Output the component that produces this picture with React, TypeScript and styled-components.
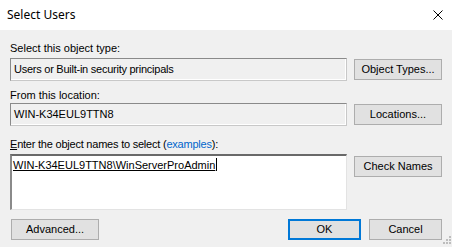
import React from "react";
import styled, { createGlobalStyle } from "styled-components";

const Global = createGlobalStyle`
  html, body { margin: 0; padding: 0; background: #f0f0f0; }
  body { width: 452px; height: 247px; overflow: hidden; }
`;

const Dialog = styled.div`
  position: relative;
  width: 452px;
  height: 247px;
  background: #f0f0f0;
  font-family: "Liberation Sans", Arial, sans-serif;
  font-size: 11px;
  color: #000;
  display: flex;
  flex-direction: column;
`;

const TitleBar = styled.div`
  height: 30px;
  background: #fff;
  display: flex;
  align-items: center;
  justify-content: space-between;
  padding: 0 9px 0 7px;
  flex-shrink: 0;
`;

const Title = styled.span`
  font-family: "Noto Sans", "Open Sans", sans-serif;
  font-size: 12px;
  color: #000;
  margin-top: -1px;
`;

const CloseIcon = styled.svg`
  width: 10px;
  height: 10px;
  display: block;
`;

const Body = styled.div`
  padding: 12px 10px 0 10px;
  display: flex;
  flex-direction: column;
`;

const Label = styled.div<{ $mt?: number; $tight?: boolean }>`
  height: 13px;
  line-height: 13px;
  margin-top: ${(p) => p.$mt ?? 0}px;
  white-space: nowrap;
  letter-spacing: ${(p) => (p.$tight ? "-0.22px" : "0")};
`;

const Row = styled.div<{ $mt?: number }>`
  display: grid;
  grid-template-columns: 337px 88px;
  column-gap: 7px;
  align-items: start;
  margin-top: ${(p) => p.$mt ?? 0}px;
`;

const ReadField = styled.div<{ $tight?: boolean }>`
  box-sizing: border-box;
  height: 23px;
  border: 1px solid #8a8a8a;
  border-right-color: #c8c8c8;
  border-bottom-color: #c8c8c8;
  box-shadow: inset -1px -1px 0 #fff;
  background: #f0f0f0;
  padding: 0 0 0 3px;
  line-height: 20px;
  white-space: nowrap;
  letter-spacing: ${(p) => (p.$tight ? "-0.25px" : "0")};
`;

const TextArea = styled.div`
  box-sizing: border-box;
  height: 56px;
  background: #fff;
  border-top: 2px solid #696969;
  border-left: 2px solid #8a8a8a;
  border-right: 1px solid #e3e3e3;
  border-bottom: 1px solid #e3e3e3;
  padding: 2px 0 0 1px;
  white-space: nowrap;
`;

const Resolved = styled.span`
  text-decoration: underline;
  line-height: 14px;
`;

const Caret = styled.span`
  display: inline-block;
  width: 1px;
  height: 13px;
  background: #000;
  vertical-align: -2px;
  margin-left: 1px;
`;

const Button = styled.button<{ $w?: number; $default?: boolean; $mt?: number }>`
  box-sizing: border-box;
  width: ${(p) => p.$w ?? 88}px;
  height: 21px;
  margin-top: ${(p) => p.$mt ?? 0}px;
  padding: 0;
  background: #e1e1e1;
  border: ${(p) => (p.$default ? "2px solid #0078d7" : "1px solid #adadad")};
  font-family: "Liberation Sans", Arial, sans-serif;
  font-size: 11px;
  color: #000;
  text-align: center;
  line-height: 17px;
`;

const Footer = styled.div`
  display: flex;
  align-items: center;
  margin-top: 9px;
  padding-left: 1px;
`;

const FooterRight = styled.div`
  margin-left: auto;
  display: flex;
  gap: 8px;
`;

const Link = styled.span`
  color: #0066cc;
`;

const Accel = styled.span`
  text-decoration: underline;
`;

const Grip = styled.svg`
  position: absolute;
  right: 1px;
  bottom: 1px;
  width: 10px;
  height: 10px;
`;

export default function App() {
  const dots: [number, number][] = [
    [8, 0],
    [5, 3],
    [8, 3],
    [2, 6],
    [5, 6],
    [8, 6],
  ];
  return (
    <>
      <Global />
      <Dialog>
        <TitleBar>
          <Title>Select Users</Title>
          <CloseIcon viewBox="0 0 10 10">
            <path d="M0.5 0.5 L9.5 9.5 M9.5 0.5 L0.5 9.5" stroke="#000" strokeWidth="1" fill="none" />
          </CloseIcon>
        </TitleBar>
        <Body>
          <Label>Select this object type:</Label>
          <Row $mt={3}>
            <ReadField $tight>Users or Built-in security principals</ReadField>
            <Button $mt={1}>Object Types...</Button>
          </Row>
          <Label $mt={8}>From this location:</Label>
          <Row $mt={1}>
            <ReadField>WIN-K34EUL9TTN8</ReadField>
            <Button $mt={1}>Locations...</Button>
          </Row>
          <Label $mt={12} $tight>
            <Accel>E</Accel>nter the object names to select (<Link>examples</Link>):
          </Label>
          <Row $mt={3}>
            <TextArea>
              <Resolved>WIN-K34EUL9TTN8\WinServerProAdmin</Resolved>
              <Caret />
            </TextArea>
            <Button $mt={2}>Check Names</Button>
          </Row>
          <Footer>
            <Button>Advanced...</Button>
            <FooterRight>
              <Button $w={73} $default>
                OK
              </Button>
              <Button $w={73}>Cancel</Button>
            </FooterRight>
          </Footer>
        </Body>
        <Grip viewBox="0 0 10 10">
          {dots.map(([x, y]) => (
            <rect key={`${x}-${y}`} x={x} y={y} width="2" height="2" fill="#bdbdbd" />
          ))}
        </Grip>
      </Dialog>
    </>
  );
}
